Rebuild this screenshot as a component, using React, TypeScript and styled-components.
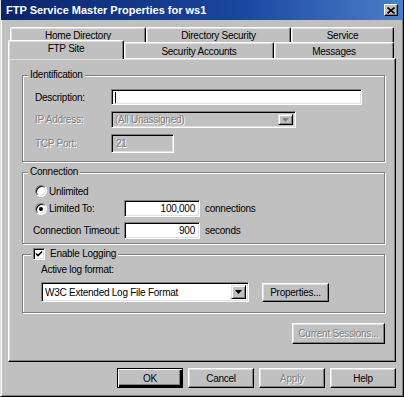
import React from 'react';
import styled, { createGlobalStyle, css } from 'styled-components';

const GlobalStyle = createGlobalStyle`
  html, body {
    margin: 0;
    padding: 0;
    background: #c0c0c0;
  }
  * {
    box-sizing: border-box;
  }
`;

const face = '#c0c0c0';

const Window = styled.div`
  width: 404px;
  height: 397px;
  background: ${face};
  border-left: 1px solid #dfdfdf;
  border-right: 1px solid #000;
  border-bottom: 1px solid #000;
  box-shadow: inset 1px 0 #fff, inset -1px -1px #808080;
  padding: 0 1px 1px 1px;
  font-family: 'Liberation Sans', Arial, sans-serif;
  font-size: 10px;
  letter-spacing: -0.25px;
  color: #000;
  display: flex;
  flex-direction: column;
  overflow: hidden;
`;

const TitleBar = styled.div`
  height: 20px;
  margin: 0 -1px;
  background: linear-gradient(to right, #0a246a 0%, #1b47a0 60%, #4a7fca 100%);
  display: flex;
  align-items: center;
  justify-content: space-between;
  padding: 0 5px 0 5px;
`;

const Title = styled.span`
  color: #fff;
  font-weight: bold;
  font-size: 11px;
  letter-spacing: 0;
`;

const CloseBox = styled.div`
  width: 14px;
  height: 12px;
  background: ${face};
  border: 1px solid;
  border-color: #fff #000 #000 #fff;
  box-shadow: inset -1px -1px #808080;
  display: flex;
  align-items: center;
  justify-content: center;
`;

const Body = styled.div`
  padding: 7px 6px 0 6px;
  display: flex;
  flex-direction: column;
`;

const TabRow = styled.div<{ $inset?: number }>`
  display: flex;
  margin-left: ${(p) => p.$inset ?? 0}px;
  height: ${(p) => (p.$inset ? 15 : 16)}px;
  position: relative;
`;

const Tab = styled.div<{ $w: number; $active?: boolean }>`
  width: ${(p) => p.$w}px;
  height: 100%;
  border-top: 1px solid #fff;
  border-left: 1px solid #fff;
  border-right: 1px solid #000;
  border-radius: 2px 2px 0 0;
  box-shadow: inset -1px 0 #808080, inset 1px 1px #dfdfdf;
  background: ${face};
  display: flex;
  align-items: center;
  justify-content: center;
  padding-top: 1px;
  ${(p) =>
    p.$active &&
    css`
      height: 19px;
      margin-top: -2px;
      margin-bottom: -1px;
      padding-top: 0;
      padding-bottom: 4px;
      z-index: 2;
      align-self: flex-start;
    `}
`;

const Panel = styled.div`
  height: 304px;
  border-top: 1px solid #fff;
  border-left: 1px solid #fff;
  border-right: 1px solid #000;
  border-bottom: 1px solid #000;
  box-shadow: inset -1px -1px #808080, inset 1px 1px #dfdfdf;
  padding: 16px 10px 0 13px;
  display: flex;
  flex-direction: column;
  gap: 10px;
`;

const Group = styled.div<{ $h: number }>`
  position: relative;
  height: ${(p) => p.$h}px;
  border: 1px solid #808080;
  box-shadow: inset 1px 1px #fff, 1px 1px #fff;
`;

const Legend = styled.div`
  position: absolute;
  top: -7px;
  left: 5px;
  padding: 0 2px;
  background: ${face};
  line-height: 12px;
  display: flex;
  align-items: center;
`;

const FieldGrid = styled.div`
  display: grid;
  grid-template-columns: 76px auto;
  grid-template-rows: 16px 17px 19px;
  row-gap: 6px;
  padding: 13px 0 0 12px;
  align-items: center;
  justify-items: start;
`;

const Label = styled.span<{ $disabled?: boolean; $w?: number }>`
  display: inline-block;
  white-space: nowrap;
  ${(p) => p.$w && `width: ${p.$w}px;`}
  ${(p) =>
    p.$disabled &&
    css`
      color: #808080;
      text-shadow: 1px 1px #fff;
    `}
`;

const sunken = css`
  border: 1px solid;
  border-color: #808080 #fff #fff #808080;
  box-shadow: inset 1px 1px #000, inset -1px -1px #dfdfdf;
`;

const TextBox = styled.div<{ $w: number; $h: number; $disabled?: boolean; $right?: boolean }>`
  ${sunken}
  width: ${(p) => p.$w}px;
  height: ${(p) => p.$h}px;
  background: ${(p) => (p.$disabled ? face : '#fff')};
  display: flex;
  align-items: center;
  justify-content: ${(p) => (p.$right ? 'flex-end' : 'flex-start')};
  padding: 0 4px 0 4px;
  white-space: nowrap;
`;

const Caret = styled.span`
  width: 1px;
  height: 11px;
  background: #000;
  margin-left: -1px;
`;

const Combo = styled.div<{ $w: number; $h: number; $disabled?: boolean }>`
  ${sunken}
  width: ${(p) => p.$w}px;
  height: ${(p) => p.$h}px;
  background: ${(p) => (p.$disabled ? face : '#fff')};
  display: flex;
  align-items: center;
  justify-content: space-between;
  padding: 2px 2px 2px 3px;
  white-space: nowrap;
`;

const DropButton = styled.div`
  width: 15px;
  height: 100%;
  background: ${face};
  border: 1px solid;
  border-color: #dfdfdf #000 #000 #dfdfdf;
  box-shadow: inset 1px 1px #fff, inset -1px -1px #808080;
  display: flex;
  align-items: center;
  justify-content: center;
`;

const Arrow = ({ color = '#000' }: { color?: string }) => (
  <svg width="7" height="4" viewBox="0 0 7 4">
    <path d="M0 0h7L3.5 4z" fill={color} />
  </svg>
);

const Row = styled.div<{ $top?: number; $h: number; $left?: number }>`
  display: flex;
  align-items: center;
  height: ${(p) => p.$h}px;
  margin-top: ${(p) => p.$top ?? 0}px;
  padding-left: ${(p) => p.$left ?? 12}px;
`;

const Radio = styled.span<{ $checked?: boolean }>`
  width: 12px;
  height: 12px;
  border-radius: 50%;
  background: #fff;
  border: 1px solid;
  border-color: #808080 #fff #fff #808080;
  box-shadow: inset 1px 1px #000, inset -1px -1px #dfdfdf;
  display: flex;
  align-items: center;
  justify-content: center;
  margin-right: 2px;
  flex: none;
  &::after {
    content: '';
    width: 4px;
    height: 4px;
    border-radius: 50%;
    background: ${(p) => (p.$checked ? '#000' : 'transparent')};
  }
`;

const CheckBox = styled.span`
  width: 12px;
  height: 12px;
  background: #fff;
  border: 1px solid;
  border-color: #808080 #fff #fff #808080;
  box-shadow: inset 1px 1px #000, inset -1px -1px #dfdfdf;
  display: flex;
  align-items: center;
  justify-content: center;
  margin-right: 5px;
`;

const Suffix = styled.span`
  margin-left: 5px;
`;

const Stack = styled.div<{ $top: number; $left: number }>`
  display: flex;
  flex-direction: column;
  padding: ${(p) => p.$top}px 0 0 ${(p) => p.$left}px;
`;

const Button = styled.div<{ $w: number; $h: number; $default?: boolean; $disabled?: boolean }>`
  width: ${(p) => p.$w}px;
  height: ${(p) => p.$h}px;
  background: ${face};
  border: 1px solid;
  border-color: #fff #000 #000 #fff;
  box-shadow: inset -1px -1px #808080, inset 1px 1px #dfdfdf;
  display: flex;
  align-items: center;
  justify-content: center;
  white-space: nowrap;
  flex: none;
  ${(p) =>
    p.$default &&
    css`
      border: 1px solid #000;
      box-shadow: inset 1px 1px #fff, inset -2px -2px #000, inset -3px -3px #808080;
    `}
  ${(p) =>
    p.$disabled &&
    css`
      color: #808080;
      text-shadow: 1px 1px #fff;
    `}
`;

const RightBar = styled.div<{ $top?: number }>`
  display: flex;
  justify-content: flex-end;
  gap: 5px;
  margin-top: ${(p) => p.$top ?? 0}px;
`;

const CheckMark = () => (
  <svg width="8" height="8" viewBox="0 0 8 8">
    <path d="M1 3.5l2 2L7 1.5" stroke="#000" strokeWidth="1.6" fill="none" />
  </svg>
);

const CloseX = () => (
  <svg width="8" height="7" viewBox="0 0 8 7">
    <path d="M0.5 0.5l7 6M7.5 0.5l-7 6" stroke="#000" strokeWidth="1.6" />
  </svg>
);

const App: React.FC = () => {
  return (
    <Window>
      <GlobalStyle />
      <TitleBar>
        <Title>FTP Service Master Properties for ws1</Title>
        <CloseBox>
          <CloseX />
        </CloseBox>
      </TitleBar>

      <Body>
        <TabRow $inset={2}>
          <Tab $w={136}>Home Directory</Tab>
          <Tab $w={145}>Directory Security</Tab>
          <Tab $w={103}>Service</Tab>
        </TabRow>
        <TabRow>
          <Tab $w={116} $active>FTP Site</Tab>
          <Tab $w={150}>Security Accounts</Tab>
          <Tab $w={120}>Messages</Tab>
        </TabRow>

        <Panel>
          <Group $h={87}>
            <Legend>Identification</Legend>
            <FieldGrid>
              <Label>Description:</Label>
              <TextBox $w={251} $h={16}>
                <Caret />
              </TextBox>
              <Label $disabled>IP Address:</Label>
              <Combo $w={185} $h={17} $disabled>
                <Label $disabled>(All Unassigned)</Label>
                <DropButton>
                  <Arrow color="#808080" />
                </DropButton>
              </Combo>
              <Label $disabled>TCP Port:</Label>
              <TextBox $w={63} $h={19} $disabled>
                <Label $disabled>21</Label>
              </TextBox>
            </FieldGrid>
          </Group>

          <Group $h={72}>
            <Legend>Connection</Legend>
            <Row $top={11} $h={14}>
              <Radio />
              <Label>Unlimited</Label>
            </Row>
            <Row $top={2} $h={17}>
              <Label $w={89}>
                <Row $h={17} $left={0}>
                  <Radio $checked />
                  Limited To:
                </Row>
              </Label>
              <TextBox $w={76} $h={17} $right>
                100,000
              </TextBox>
              <Suffix>connections</Suffix>
            </Row>
            <Row $top={5} $h={17} $left={10}>
              <Label $w={91}>Connection Timeout:</Label>
              <TextBox $w={76} $h={17} $right>
                900
              </TextBox>
              <Suffix>seconds</Suffix>
            </Row>
          </Group>

          <Group $h={59}>
            <Legend style={{ left: 8 }}>
              <CheckBox>
                <CheckMark />
              </CheckBox>
              Enable Logging
            </Legend>
            <Stack $top={9} $left={18}>
              <Label>Active log format:</Label>
              <Row $top={7} $h={20} $left={0}>
                <Combo $w={208} $h={20}>
                  <span>W3C Extended Log File Format</span>
                  <DropButton>
                    <Arrow />
                  </DropButton>
                </Combo>
                <Button $w={67} $h={19} style={{ marginLeft: 13 }}>
                  Properties...
                </Button>
              </Row>
            </Stack>
          </Group>

          <RightBar>
            <Button $w={93} $h={21} $disabled>
              Current Sessions...
            </Button>
          </RightBar>
        </Panel>

        <RightBar $top={6}>
          <Button $w={66} $h={20} $default>
            OK
          </Button>
          <Button $w={66} $h={20}>
            Cancel
          </Button>
          <Button $w={66} $h={20} $disabled>
            Apply
          </Button>
          <Button $w={66} $h={20}>
            Help
          </Button>
        </RightBar>
      </Body>
    </Window>
  );
};

export default App;
